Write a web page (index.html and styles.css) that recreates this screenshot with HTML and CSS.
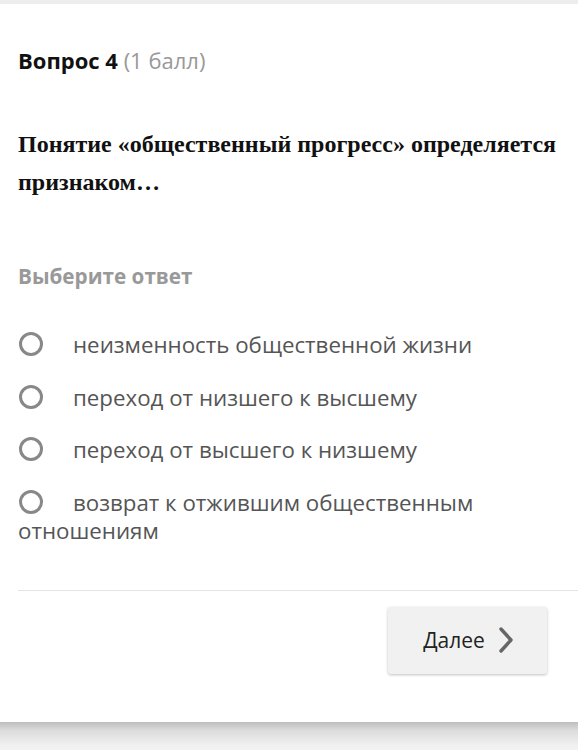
FILE: index.html
```html
<!DOCTYPE html>
<html lang="ru">
<head>
<meta charset="utf-8">
<link rel="stylesheet" href="styles.css">
</head>
<body>
<div class="page">
  <div class="card">
    <div class="qhead"><span class="qnum">Вопрос 4</span> <span class="qpts">(1 балл)</span></div>
    <div class="qtext">Понятие «общественный прогресс» определяется признаком…</div>
    <div class="prompt">Выберите ответ</div>
    <div class="options">
      <div class="opt"><span class="radio"></span><span class="otext">неизменность общественной жизни</span></div>
      <div class="opt"><span class="radio"></span><span class="otext">переход от низшего к высшему</span></div>
      <div class="opt"><span class="radio"></span><span class="otext">переход от высшего к низшему</span></div>
      <div class="opt"><span class="radio"></span><span class="otext">возврат к отжившим общественным отношениям</span></div>
    </div>
    <div class="footer">
      <button class="next">Далее
        <svg class="chev" width="16" height="28" viewBox="0 0 16 28"><path d="M3 3 L13 14 L3 25" fill="none" stroke="#666" stroke-width="3.4" stroke-linecap="round" stroke-linejoin="round"/></svg>
      </button>
    </div>
  </div>
  <div class="shadowband"></div>
</div>
</body>
</html>
```
FILE: styles.css
```css
html, body {
  margin: 0;
  padding: 0;
  background: #fff;
}
.page {
  width: 578px;
  height: 750px;
  overflow: hidden;
  display: flex;
  flex-direction: column;
  border-top: 4px solid #ededed;
  box-sizing: border-box;
}
.card {
  height: 718px;
  box-sizing: border-box;
  padding: 42px 0 0 18px;
  font-family: "Open Sans", sans-serif;
}
.qhead {
  font-size: 22px;
  line-height: 28px;
}
.qnum {
  font-weight: 700;
  color: #111;
}
.qpts {
  color: #999;
}
.qtext {
  margin-top: 51px;
  padding-right: 10px;
  font-family: "Liberation Serif", serif;
  font-weight: 700;
  font-size: 24px;
  line-height: 38px;
  color: #111;
}
.prompt {
  margin-top: 61px;
  font-size: 20.7px;
  font-weight: 700;
  color: #999;
  line-height: 28px;
}
.options {
  margin-top: 41px;
  padding-right: 30px;
}
.opt {
  font-size: 22.3px;
  line-height: 28px;
  color: #555;
  margin-bottom: 24.5px;
}
.opt:last-child {
  margin-bottom: 0;
}
.radio {
  display: inline-block;
  width: 24px;
  height: 24px;
  box-sizing: border-box;
  border: 3px solid #888;
  border-radius: 50%;
  vertical-align: -3px;
  margin-right: 30px;
  margin-left: 1px;
}
.footer {
  margin-top: 45px;
  border-top: 1px solid #e4e4e4;
  display: flex;
  justify-content: flex-end;
  padding: 16px 31px 0 0;
}
.next {
  width: 159px;
  height: 67px;
  display: flex;
  align-items: center;
  justify-content: center;
  gap: 13px;
  padding: 0 0 0 2px;
  border: none;
  border-radius: 3px;
  background: #f1f1f1;
  box-shadow: 0 1px 3px rgba(0,0,0,0.25);
  font-family: "Open Sans", sans-serif;
  font-size: 21px;
  color: #222;
}
.chev {
  display: block;
}
.shadowband {
  flex: 1;
  background: linear-gradient(#bdbdbd, #dcdcdc 30%, #efefef 80%, #f2f2f2);
}
```
